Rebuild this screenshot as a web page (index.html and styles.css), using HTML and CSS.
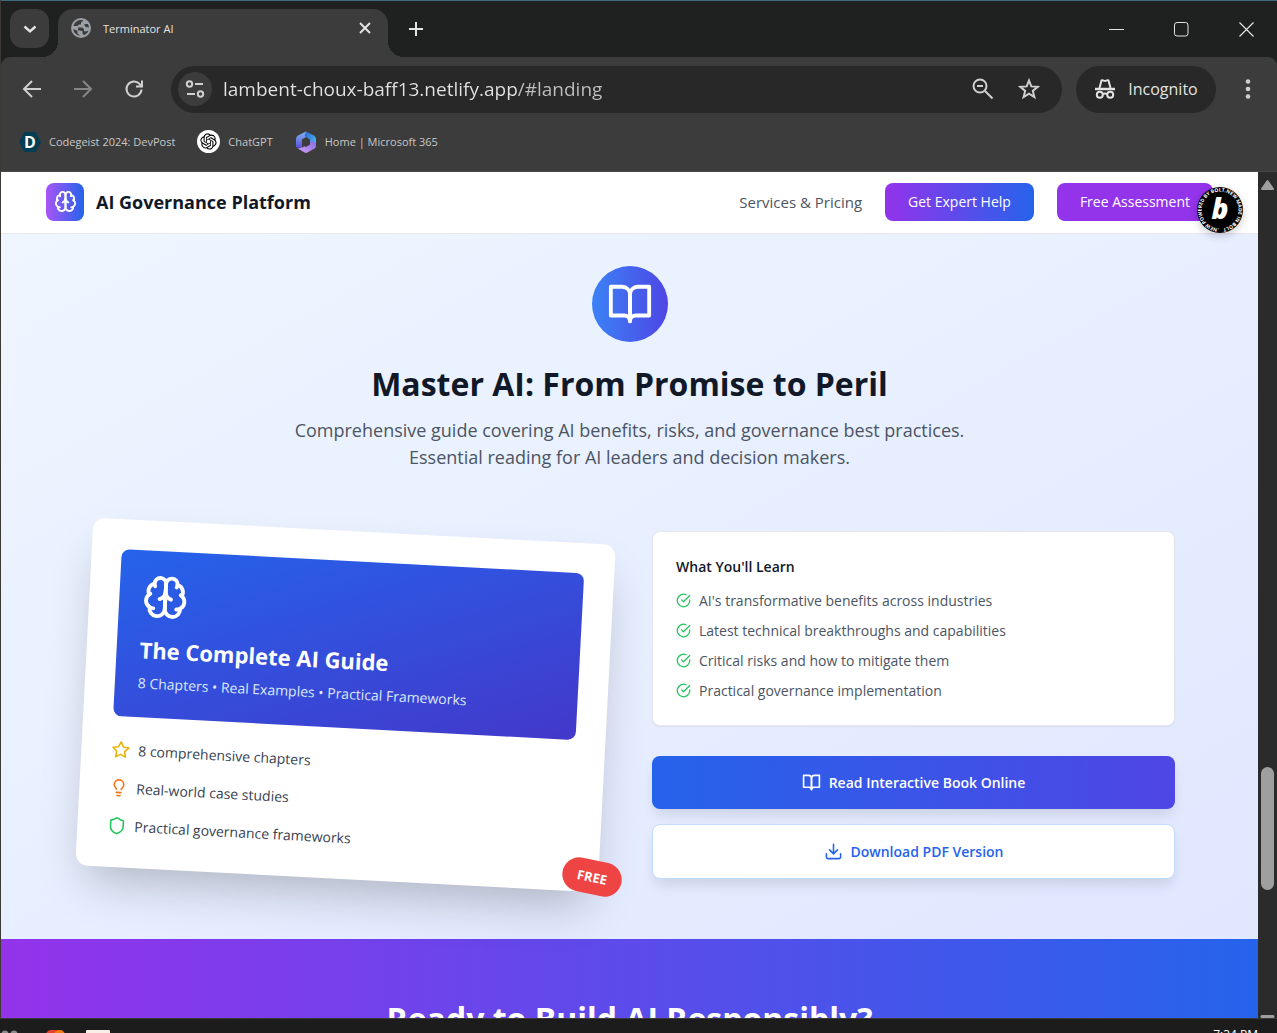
FILE: index.html
```html
<!DOCTYPE html>
<html lang="en">
<head>
  <meta charset="UTF-8">
  <title>Terminator AI</title>
  <link rel="stylesheet" href="styles.css">
</head>
<body>

  <!-- shared icons -->
  <svg class="sprite" aria-hidden="true">
    <symbol id="brain" viewBox="0 0 24 24">
      <path d="M12 5a3 3 0 1 0-5.997.125 4 4 0 0 0-2.526 5.77 4 4 0 0 0 .556 6.588A4 4 0 1 0 12 18Z"/>
      <path d="M12 5a3 3 0 1 1 5.997.125 4 4 0 0 1 2.526 5.77 4 4 0 0 1-.556 6.588A4 4 0 1 1 12 18Z"/>
      <path d="M15 13a4.5 4.5 0 0 1-3-4 4.5 4.5 0 0 1-3 4"/>
      <path d="M17.599 6.5a3 3 0 0 0 .399-1.375M6.003 5.125A3 3 0 0 0 6.401 6.5M3.477 10.896a4 4 0 0 1 .585-.396M19.938 10.5a4 4 0 0 1 .585.396M6 18a4 4 0 0 1-1.967-.516M19.967 17.484A4 4 0 0 1 18 18"/>
    </symbol>
    <symbol id="book" viewBox="0 0 24 24">
      <path d="M2 3h6a4 4 0 0 1 4 4v14a3 3 0 0 0-3-3H2z"/>
      <path d="M22 3h-6a4 4 0 0 0-4 4v14a3 3 0 0 1 3-3h7z"/>
    </symbol>
    <symbol id="check" viewBox="0 0 24 24">
      <path d="M22 11.08V12a10 10 0 1 1-5.93-9.14"/>
      <path d="m9 11 3 3L22 4"/>
    </symbol>
  </svg>

  <div class="window">
    <div class="tab-strip">
      <button class="tab-search" aria-label="Search tabs">
        <svg class="icon" width="16" height="16" viewBox="0 0 16 16"><path d="m2.500 5.500 5.500 5 5.500-5" stroke-width="2.400"/></svg>
      </button>
      <div class="tab">
        <svg width="20" height="20" viewBox="0 0 20 20">
          <circle cx="10" cy="10" r="10" fill="#9aa0a6"/>
          <path d="M12.500 2.500 10 4.500v2H7.800L6.500 8H2.300A8 8 0 0 1 12.500 2.500zM2.200 11l4.300 1.800v2.700l3 2.500A8 8 0 0 1 2.200 11zM7 9.500h4.500l1.500 2v1.700h3l1.700-.7a8 8 0 0 1-4.700 4.800l-1.500-1.800v-2.300L9 12.500H7zM13.500 6h3.600l.9 3.500-3-.5-1.500-1.200z" fill="#3c3c3c"/>
        </svg>
        <span class="tab-title">Terminator AI</span>
        <button class="tab-close" aria-label="Close tab">
          <svg class="icon" width="12" height="12" viewBox="0 0 12 12"><path d="m1 1 10 10M11 1 1 11" stroke-width="2"/></svg>
        </button>
      </div>
      <button class="new-tab" aria-label="New tab">
        <svg class="icon" width="16" height="16" viewBox="0 0 16 16"><path d="M8 1v14M1 8h14" stroke-width="2"/></svg>
      </button>
      <div class="window-buttons">
        <button aria-label="Minimize"><svg class="icon" width="15" height="15" viewBox="0 0 15 15"><path d="M0 7.500h15" stroke-width="1"/></svg></button>
        <button aria-label="Maximize"><svg class="icon" width="15" height="15" viewBox="0 0 15 15"><rect x=".5" y=".5" width="13.500" height="13.500" rx="2.500" stroke-width="1"/></svg></button>
        <button aria-label="Close"><svg class="icon" width="15" height="15" viewBox="0 0 15 15"><path d="m.5.5 14 14m0-14-14 14" stroke-width="1.200"/></svg></button>
      </div>
    </div>

    <div class="toolbar">
      <button aria-label="Back"><svg class="icon" width="20" height="20" viewBox="0 0 20 20"><path d="M19 10H3M10 2l-8 8 8 8" stroke-width="2"/></svg></button>
      <button class="dim" aria-label="Forward"><svg class="icon" width="20" height="20" viewBox="0 0 20 20"><path d="M1 10h16M10 2l8 8-8 8" stroke-width="2"/></svg></button>
      <button aria-label="Reload"><svg class="icon" width="20" height="20" viewBox="0 0 20 20"><path d="M17.500 10.500a7.500 7.500 0 1 1-2-5.600L18 7.300M18 1.500v6h-6" stroke-width="2"/></svg></button>
      <div class="omnibox">
        <button class="site-info" aria-label="Site information">
          <svg class="icon" width="20" height="20" viewBox="0 0 20 20"><circle cx="4.500" cy="5" r="2.700"/><path d="M10 5h8M2 15h8" stroke-width="2"/><circle cx="15.500" cy="15" r="2.700"/></svg>
        </button>
        <input class="url" type="text" aria-label="Address" value="lambent-choux-baff13.netlify.app/#landing">
        <button aria-label="Zoom"><svg class="icon" width="22" height="22" viewBox="0 0 22 22"><circle cx="8" cy="8" r="6.500"/><path d="m13 13 7.500 7.500M5 8h6" stroke-width="2"/></svg></button>
        <button aria-label="Bookmark this page"><svg class="icon" width="22" height="22" viewBox="0 0 22 22"><path d="m11 2.500 2.300 5.900 6.400.4-4.900 4.100 1.600 6.200-5.400-3.400-5.400 3.400 1.600-6.200-4.900-4.100 6.400-.4z" stroke-width="2"/></svg></button>
      </div>
      <button class="incognito">
        <svg class="icon" width="22" height="20" viewBox="0 0 22 20"><path d="M1 10h20" stroke-width="2.500"/><path d="M5.500 9 7.500 1.500c1.500-.8 2.200.4 3.500.4s2-1.200 3.500-.4L16.500 9"/><circle cx="5.800" cy="15.800" r="3"/><circle cx="16.200" cy="15.800" r="3"/><path d="M8.800 15.200q2.200-1.300 4.400 0"/></svg>
        <span>Incognito</span>
      </button>
      <button class="menu" aria-label="Menu">
        <svg width="6" height="20" viewBox="0 0 6 20" fill="currentColor"><circle cx="3" cy="2.500" r="2.300"/><circle cx="3" cy="10" r="2.300"/><circle cx="3" cy="17.500" r="2.300"/></svg>
      </button>
    </div>

    <div class="bookmarks">
      <a href="#devpost">
        <svg width="22" height="22" viewBox="0 0 22 22"><path d="M5.500 1h11L22 11l-5.500 10h-11L0 11z" fill="#003e54"/><text x="11" y="17" class="devpost-d">D</text></svg>
        Codegeist 2024: DevPost
      </a>
      <a href="#chatgpt">
        <svg width="23" height="23" viewBox="-5 -5 34 34"><circle cx="12" cy="12" r="17" fill="#fff"/><path d="M22.282 9.821a5.985 5.985 0 0 0-.516-4.910 6.046 6.046 0 0 0-6.510-2.900A6.065 6.065 0 0 0 4.981 4.182a5.985 5.985 0 0 0-3.998 2.900 6.046 6.046 0 0 0 .743 7.097 5.980 5.980 0 0 0 .511 4.911 6.051 6.051 0 0 0 6.515 2.900A5.985 5.985 0 0 0 13.260 24a6.056 6.056 0 0 0 5.772-4.206 5.989 5.989 0 0 0 3.998-2.900 6.056 6.056 0 0 0-.748-7.073zm-9.022 12.608a4.476 4.476 0 0 1-2.876-1.041l.142-.080 4.778-2.758a.795.795 0 0 0 .393-.681v-6.737l2.020 1.169a.071.071 0 0 1 .038.052v5.583a4.504 4.504 0 0 1-4.495 4.494zm-9.661-4.125a4.471 4.471 0 0 1-.535-3.014l.142.085 4.783 2.758a.771.771 0 0 0 .781 0l5.843-3.369v2.332a.080.080 0 0 1-.033.062L9.740 19.950a4.499 4.499 0 0 1-6.141-1.646zM2.341 7.896a4.485 4.485 0 0 1 2.366-1.973V11.600a.766.766 0 0 0 .388.677l5.814 3.354-2.020 1.169a.076.076 0 0 1-.071 0l-4.830-2.787A4.504 4.504 0 0 1 2.341 7.872zm16.596 3.856L13.104 8.364 15.119 7.200a.076.076 0 0 1 .071 0l4.830 2.791a4.494 4.494 0 0 1-.677 8.104v-5.677a.790.790 0 0 0-.407-.667zm2.011-3.023-.142-.085-4.774-2.782a.776.776 0 0 0-.785 0L9.409 9.230V6.897a.066.066 0 0 1 .028-.062l4.830-2.787a4.499 4.499 0 0 1 6.680 4.660zM8.307 12.863l-2.020-1.164a.080.080 0 0 1-.038-.057V6.074a4.499 4.499 0 0 1 7.376-3.454l-.142.081L8.704 5.459a.795.795 0 0 0-.393.681zm1.098-2.365 2.602-1.500 2.607 1.500v2.999l-2.597 1.500-2.607-1.500z"/></svg>
        ChatGPT
      </a>
      <a href="#m365">
        <svg width="22" height="22" viewBox="0 0 22 22">
          <defs>
            <linearGradient id="m1" x1="0" y1="0" x2="0" y2="1"><stop offset="0" stop-color="#7fb4f5"/><stop offset="1" stop-color="#5a4bd8"/></linearGradient>
            <linearGradient id="m2" x1="0" y1="0" x2="1" y2="1"><stop offset="0" stop-color="#2f5fd0"/><stop offset="1" stop-color="#4bc4f5"/></linearGradient>
            <linearGradient id="m3" x1="0" y1="1" x2="1" y2="0"><stop offset="0" stop-color="#d8a0f5"/><stop offset="1" stop-color="#7c6be0"/></linearGradient>
          </defs>
          <path d="M11 .5 3 4.500Q1 5.500 1 8v8l6 1.500V8.500l5-3V2z" fill="url(#m1)"/>
          <path d="m11 .5 8 4q2 1 2 3.500v7l-6-2V8.500L9.500 5z" fill="url(#m2)"/>
          <path d="M21 12v3q0 1.500-1.500 2.500L12.500 21.500q-1.500.8-3 0L2 17q3 1 6-1l7-4 1-3z" fill="url(#m3)"/>
          <path d="m11 7.500 4 2v4l-4 2.500-4-2.500v-4z" fill="#3c3c3c"/>
        </svg>
        Home | Microsoft 365
      </a>
    </div>

    <div class="viewport">
      <div class="page">
        <header class="site-header">
          <div class="brand">
            <span class="brand-icon"><svg class="icon" width="23" height="23"><use href="#brain"/></svg></span>
            AI Governance Platform
          </div>
          <nav>
            <a class="nav-link" href="#services">Services &amp; Pricing</a>
            <button class="btn-nav gradient">Get Expert Help</button>
            <button class="btn-nav">Free Assessment</button>
          </nav>
          <a class="bolt-badge" href="#bolt" aria-label="Made in Bolt">
            <svg width="46" height="46" viewBox="0 0 46 46">
              <circle cx="23" cy="23" r="23"/>
              <path id="ring" d="M22 41.500a18.500 18.500 0 1 1 2 0" fill="none"/>
              <text class="ring-text"><textPath href="#ring">.NEW POWERED BY BOLT.NEW MADE IN BOLT</textPath></text>
              <text class="bolt-b" x="23" y="32">b</text>
            </svg>
          </a>
        </header>

        <section class="guide">
          <div class="guide-intro">
            <span class="guide-icon"><svg class="icon" width="46" height="46"><use href="#book"/></svg></span>
            <h1>Master AI: From Promise to Peril</h1>
            <p>Comprehensive guide covering AI benefits, risks, and governance best practices.<br>Essential reading for AI leaders and decision makers.</p>
          </div>

          <div class="guide-grid">
            <div class="book-wrap">
              <div class="book-card">
                <div class="book-cover">
                  <svg class="icon" width="46" height="46"><use href="#brain"/></svg>
                  <h2>The Complete AI Guide</h2>
                  <p>8 Chapters • Real Examples • Practical Frameworks</p>
                </div>
                <ul class="features">
                  <li><svg class="icon yellow" width="19" height="19" viewBox="0 0 24 24"><path d="m12 2 3.090 6.260L22 9.270l-5 4.870 1.180 6.880L12 17.770l-6.180 3.250L7 14.140 2 9.270l6.910-1.010z"/></svg>8 comprehensive chapters</li>
                  <li><svg class="icon orange" width="19" height="19" viewBox="0 0 24 24"><path d="M15 14c.2-1 .7-1.700 1.500-2.500 1-.9 1.500-2.200 1.500-3.500A6 6 0 0 0 6 8c0 1 .2 2.200 1.500 3.500.7.7 1.300 1.500 1.500 2.500M9 18h6M10 22h4"/></svg>Real-world case studies</li>
                  <li><svg class="icon green" width="19" height="19" viewBox="0 0 24 24"><path d="M20 13c0 5-3.500 7.500-7.660 8.950a1 1 0 0 1-.67-.01C7.500 20.500 4 18 4 13V6a1 1 0 0 1 1-1c2 0 4.500-1.200 6.240-2.720a1.170 1.170 0 0 1 1.520 0C14.510 3.810 17 5 19 5a1 1 0 0 1 1 1z"/></svg>Practical governance frameworks</li>
                </ul>
              </div>
              <span class="free-badge">FREE</span>
            </div>

            <div class="learn">
              <div class="learn-card">
                <h3>What You'll Learn</h3>
                <ul>
                  <li><svg class="icon green" width="15" height="15"><use href="#check"/></svg>AI's transformative benefits across industries</li>
                  <li><svg class="icon green" width="15" height="15"><use href="#check"/></svg>Latest technical breakthroughs and capabilities</li>
                  <li><svg class="icon green" width="15" height="15"><use href="#check"/></svg>Critical risks and how to mitigate them</li>
                  <li><svg class="icon green" width="15" height="15"><use href="#check"/></svg>Practical governance implementation</li>
                </ul>
              </div>
              <button class="btn-big read"><svg class="icon" width="19" height="19"><use href="#book"/></svg>Read Interactive Book Online</button>
              <button class="btn-big download"><svg class="icon" width="19" height="19" viewBox="0 0 24 24"><path d="M21 15v4a2 2 0 0 1-2 2H5a2 2 0 0 1-2-2v-4M7 10l5 5 5-5M12 15V3"/></svg>Download PDF Version</button>
            </div>
          </div>
        </section>

        <section class="cta">
          <h2>Ready to Build AI Responsibly?</h2>
        </section>
      </div>

      <div class="scrollbar">
        <svg width="15" height="12" viewBox="0 0 15 12"><path d="M7.500 2 13 10H2z" fill="#9f9f9f" stroke="#9f9f9f" stroke-width="2" stroke-linejoin="round"/></svg>
        <div class="track"><div class="thumb"></div></div>
        <svg width="15" height="3" viewBox="0 0 15 3"><path d="M2 1.500h11" stroke="#9f9f9f" stroke-width="3" stroke-linecap="round"/></svg>
      </div>
    </div>
  </div>

  <div class="taskbar">
    <svg width="120" height="16" viewBox="0 0 120 16">
      <circle cx="5" cy="4" r="3.500" fill="#8b8b8b"/><circle cx="14" cy="4" r="3.500" fill="#8b8b8b"/>
      <rect x="46" width="14" height="14" rx="5" fill="#e8402a"/><rect x="54" width="11" height="14" rx="5" fill="#f07a10"/>
      <rect x="86" width="24" height="14" rx="1" fill="#fbeee6"/>
    </svg>
    <span class="clock">7:34 PM</span>
  </div>

</body>
</html>
```

FILE: styles.css
```css
* {
  box-sizing: border-box;
}

body {
  margin: 0;
  height: 100vh;
  display: flex;
  flex-direction: column;
  overflow: hidden;
  font-family: 'Segoe UI', 'Open Sans', 'Noto Sans', sans-serif;
  font-size: 14px;
  background-color: #3d3a35;
}

h1, h2, h3, p, ul {
  margin: 0;
  padding: 0;
}

ul {
  list-style: none;
}

a {
  text-decoration: none;
  color: inherit;
}

button {
  font: inherit;
  color: inherit;
  background: none;
  border: 0;
  padding: 0;
  display: flex;
  align-items: center;
  justify-content: center;
  cursor: pointer;
}

svg {
  display: block;
  flex: none;
}

.sprite {
  position: absolute;
  width: 0;
  height: 0;
}

.icon {
  fill: none;
  stroke: currentColor;
  stroke-width: 2;
  stroke-linecap: round;
  stroke-linejoin: round;
}

/* browser window */
.window {
  flex: 1;
  min-height: 0;
  margin-left: 1px;
  border-top: 1px solid #3f6b80;
  display: flex;
  flex-direction: column;
  background-color: #1f2120;
  color: #e3e3e3;
}

.window .toolbar .icon,
.window .tab-strip .icon {
  stroke-linecap: butt;
  stroke-linejoin: miter;
}

.tab-strip {
  display: flex;
  height: 56px;
  padding: 8px 0 0 9px;
}

.tab-search {
  width: 39px;
  height: 39px;
  border-radius: 13px;
  background-color: #3c3c3c;
}

.tab {
  position: relative;
  display: flex;
  align-items: center;
  width: 330px;
  height: 48px;
  margin-left: 9px;
  padding: 0 17px 10px 13px;
  border-radius: 15px 15px 0 0;
  background-color: #3c3c3c;
}

.tab::before,
.tab::after {
  content: '';
  position: absolute;
  bottom: 0;
  width: 16px;
  height: 16px;
}

.tab::before {
  right: 100%;
  background: radial-gradient(circle at 0 0, transparent 16px, #3c3c3c 16px);
}

.tab::after {
  left: 100%;
  background: radial-gradient(circle at 100% 0, transparent 16px, #3c3c3c 16px);
}

.tab-title {
  flex: 1;
  margin-left: 12px;
  font-size: 11px;
}

.new-tab {
  width: 56px;
  height: 40px;
}

.window-buttons {
  display: flex;
  margin: 0 -2px 0 auto;
}

.window-buttons button {
  width: 65px;
  height: 40px;
}

.toolbar {
  display: flex;
  align-items: center;
  height: 64px;
  padding: 0 7px 0 5px;
  border-radius: 9px 9px 0 0;
  background-color: #3c3c3c;
  color: #d0d0d0;
}

.toolbar > button {
  width: 51px;
}

.toolbar .dim {
  color: #868686;
}

.omnibox {
  flex: 1;
  display: flex;
  align-items: center;
  gap: 24px;
  height: 47px;
  margin: 0 14px 0 12px;
  padding: 0 22px 0 7px;
  border-radius: 24px;
  background-color: #282828;
}

.site-info {
  width: 34px;
  height: 34px;
  border-radius: 50%;
  background-color: #3c3c3c;
}

.url {
  flex: 1;
  margin-left: -13px;
  min-width: 0;
  padding: 0;
  border: 0;
  outline: 0;
  font-family: inherit;
  font-size: 19px;
  /* host is bright, path is dimmed */
  background: linear-gradient(to right, #e3e3e3 295px, #c0c0c0 295px);
  background-clip: text;
  color: transparent;
}

.toolbar .incognito {
  width: 140px;
  height: 47px;
  gap: 12px;
  border-radius: 24px;
  background-color: #282828;
  color: #e3e3e3;
  font-size: 16px;
}

.toolbar .menu {
  width: 44px;
  margin-left: 10px;
}

.bookmarks {
  display: flex;
  gap: 22px;
  height: 51px;
  padding: 9px 18px;
  align-items: flex-start;
  background-color: #3c3c3c;
  border-bottom: 1px solid #484848;
}

.bookmarks a {
  display: flex;
  align-items: center;
  gap: 8px;
  height: 23px;
  font-size: 11px;
  color: #c7c7c7;
}

.devpost-d {
  font-size: 16px;
  font-weight: 700;
  text-anchor: middle;
  fill: #fff;
}

.viewport {
  flex: 1;
  min-height: 0;
  display: flex;
}

.page {
  flex: 1;
  min-width: 0;
  overflow: hidden;
  background-color: #fff;
  color: #111827;
}

.scrollbar {
  width: 19px;
  display: flex;
  flex-direction: column;
  align-items: center;
  padding-top: 7px;
  background-color: #2b2b2b;
}

.track {
  flex: 1;
  display: flex;
  flex-direction: column;
}

.track::before {
  content: '';
  flex: 576;
}

.track::after {
  content: '';
  flex: 125;
}

.thumb {
  flex: 123;
  width: 13px;
  border-radius: 7px;
  background-color: #9f9f9f;
}

/* site header */
.site-header {
  position: relative;
  display: flex;
  align-items: center;
  justify-content: space-between;
  height: 62px;
  padding: 0 45px 2px;
  background-color: #fff;
  border-bottom: 1px solid #e5e7eb;
}

.brand {
  display: flex;
  align-items: center;
  gap: 12px;
  font-size: 18px;
  font-weight: 700;
}

.brand-icon {
  display: flex;
  align-items: center;
  justify-content: center;
  width: 38px;
  height: 38px;
  border-radius: 8px;
  background: linear-gradient(to right, #a855f7, #2563eb);
  color: #fff;
}

.site-header nav {
  display: flex;
  align-items: center;
  gap: 23px;
}

.nav-link {
  font-size: 15px;
  color: #4b5563;
}

.btn-nav {
  height: 38px;
  padding: 0 23px;
  border-radius: 8px;
  background-color: #9333ea;
  color: #fff;
}

.btn-nav.gradient {
  background: linear-gradient(to right, #9333ea, #2563eb);
}

.bolt-badge {
  position: absolute;
  top: 15px;
  right: 15px;
  border-radius: 50%;
  box-shadow: 0 3px 8px rgba(0, 0, 0, 0.2);
}

.ring-text {
  font-size: 5px;
  font-weight: 700;
  fill: #fff;
}

.bolt-b {
  font-size: 28px;
  font-weight: 800;
  font-style: italic;
  text-anchor: middle;
  fill: #fff;
}

/* guide section */
.guide {
  padding: 32px 83px 60px;
  background: linear-gradient(to bottom right, #eff6ff, #e0e7ff);
}

.guide-intro {
  display: flex;
  flex-direction: column;
  align-items: center;
  text-align: center;
}

.guide-icon {
  display: flex;
  align-items: center;
  justify-content: center;
  width: 76px;
  height: 76px;
  border-radius: 50%;
  background: linear-gradient(to right, #3b82f6, #4f46e5);
  color: #fff;
}

.guide-intro h1 {
  margin-top: 22px;
  font-size: 32px;
  line-height: 40px;
  font-weight: 700;
}

.guide-intro p {
  margin-top: 13px;
  font-size: 18px;
  line-height: 27px;
  color: #4b5563;
}

.guide-grid {
  display: grid;
  grid-template-columns: 1fr 1fr;
  gap: 45px;
  align-items: center;
  margin-top: 60px;
}

.book-wrap {
  position: relative;
}

.book-card {
  padding: 30px;
  border-radius: 12px;
  background-color: #fff;
  box-shadow: 0 24px 48px -12px rgba(0, 0, 0, 0.25);
  transform: rotate(3deg);
}

.book-cover {
  padding: 23px;
  border-radius: 8px;
  background: linear-gradient(to bottom right, #2563eb, #4338ca);
  color: #fff;
}

.book-cover h2 {
  margin-top: 15px;
  font-size: 22px;
  line-height: 30px;
  font-weight: 700;
}

.book-cover p {
  margin-top: 7px;
  line-height: 23px;
  color: #dbeafe;
}

.features {
  display: flex;
  flex-direction: column;
  gap: 15px;
  margin-top: 22px;
}

.features li {
  display: flex;
  align-items: center;
  gap: 8px;
  line-height: 23px;
  color: #374151;
}

.free-badge {
  position: absolute;
  right: -15px;
  bottom: -15px;
  padding: 8px 15px;
  border-radius: 17px;
  background-color: #ef4444;
  color: #fff;
  font-size: 13px;
  line-height: 18px;
  font-weight: 700;
  transform: rotate(12deg);
}

.yellow {
  color: #eab308;
}

.orange {
  color: #f97316;
}

.green {
  color: #22c55e;
}

.learn {
  display: flex;
  flex-direction: column;
}

.learn-card {
  padding: 23px;
  border: 1px solid #e5e7eb;
  border-radius: 8px;
  background-color: #fff;
  box-shadow: 0 1px 2px rgba(0, 0, 0, 0.05);
}

.learn-card h3 {
  margin-bottom: 11px;
  font-size: 14px;
  line-height: 23px;
  font-weight: 600;
}

.learn-card ul {
  display: flex;
  flex-direction: column;
  gap: 7px;
}

.learn-card li {
  display: flex;
  align-items: center;
  gap: 8px;
  line-height: 23px;
  color: #4b5563;
}

.btn-big {
  gap: 8px;
  height: 53px;
  border-radius: 8px;
  font-weight: 600;
  box-shadow: 0 8px 14px -3px rgba(0, 0, 0, 0.12);
}

.read {
  margin-top: 30px;
  background: linear-gradient(to right, #2563eb, #4f46e5);
  color: #fff;
}

.download {
  margin-top: 15px;
  height: 55px;
  border: 1px solid #bfdbfe;
  background-color: #fff;
  color: #2563eb;
}

.cta {
  padding: 60px 45px;
  background: linear-gradient(to right, #9333ea, #2563eb);
  color: #fff;
  text-align: center;
}

.cta h2 {
  font-size: 32px;
  line-height: 40px;
  font-weight: 700;
}

/* taskbar */
.taskbar {
  display: flex;
  justify-content: space-between;
  align-items: flex-start;
  height: 15px;
  padding: 11px 19px 0 0;
  overflow: hidden;
  border-top: 1px solid #3a3a3a;
  background-color: #1c1c1c;
}

.clock {
  font-size: 12px;
  line-height: 10px;
  color: #fff;
}
```
